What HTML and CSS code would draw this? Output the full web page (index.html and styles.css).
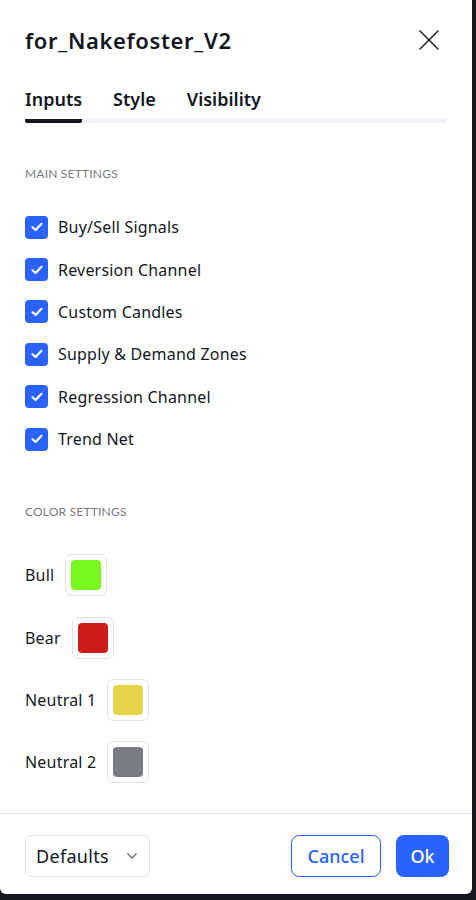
FILE: index.html
```html
<!DOCTYPE html>
<html>
<head>
<meta charset="utf-8">
<link rel="stylesheet" href="styles.css">
</head>
<body>
<div class="dialog">
  <div class="header">
    <div class="title">for_Nakefoster_V2</div>
    <svg class="close" width="22" height="22" viewBox="0 0 22 22"><path d="M1.5 1.5 L20.5 20.5 M20.5 1.5 L1.5 20.5" stroke="#131722" stroke-width="1.4" fill="none"/></svg>
  </div>
  <div class="tabs">
    <div class="tab active">Inputs</div>
    <div class="tab">Style</div>
    <div class="tab">Visibility</div>
  </div>
  <div class="content">
    <div class="section-title first">MAIN SETTINGS</div>
    <div class="check-list">
      <div class="check-row"><span class="cb"><svg width="14" height="14" viewBox="0 0 14 14"><path d="M2.5 7.2 L5.6 10 L11.5 3.8" stroke="#fff" stroke-width="2.2" fill="none" stroke-linecap="round" stroke-linejoin="round"/></svg></span><span class="label">Buy/Sell Signals</span></div>
      <div class="check-row"><span class="cb"><svg width="14" height="14" viewBox="0 0 14 14"><path d="M2.5 7.2 L5.6 10 L11.5 3.8" stroke="#fff" stroke-width="2.2" fill="none" stroke-linecap="round" stroke-linejoin="round"/></svg></span><span class="label">Reversion Channel</span></div>
      <div class="check-row"><span class="cb"><svg width="14" height="14" viewBox="0 0 14 14"><path d="M2.5 7.2 L5.6 10 L11.5 3.8" stroke="#fff" stroke-width="2.2" fill="none" stroke-linecap="round" stroke-linejoin="round"/></svg></span><span class="label">Custom Candles</span></div>
      <div class="check-row"><span class="cb"><svg width="14" height="14" viewBox="0 0 14 14"><path d="M2.5 7.2 L5.6 10 L11.5 3.8" stroke="#fff" stroke-width="2.2" fill="none" stroke-linecap="round" stroke-linejoin="round"/></svg></span><span class="label">Supply &amp; Demand Zones</span></div>
      <div class="check-row"><span class="cb"><svg width="14" height="14" viewBox="0 0 14 14"><path d="M2.5 7.2 L5.6 10 L11.5 3.8" stroke="#fff" stroke-width="2.2" fill="none" stroke-linecap="round" stroke-linejoin="round"/></svg></span><span class="label">Regression Channel</span></div>
      <div class="check-row"><span class="cb"><svg width="14" height="14" viewBox="0 0 14 14"><path d="M2.5 7.2 L5.6 10 L11.5 3.8" stroke="#fff" stroke-width="2.2" fill="none" stroke-linecap="round" stroke-linejoin="round"/></svg></span><span class="label">Trend Net</span></div>
    </div>
    <div class="section-title second">COLOR SETTINGS</div>
    <div class="color-list">
      <div class="color-row"><span class="label">Bull</span><span class="swatch-box"><span class="swatch bull"></span></span></div>
      <div class="color-row"><span class="label">Bear</span><span class="swatch-box"><span class="swatch bear"></span></span></div>
      <div class="color-row"><span class="label">Neutral 1</span><span class="swatch-box"><span class="swatch n1"></span></span></div>
      <div class="color-row"><span class="label">Neutral 2</span><span class="swatch-box"><span class="swatch n2"></span></span></div>
    </div>
  </div>
  <div class="footer">
    <div class="select">Defaults<svg width="12" height="8" viewBox="0 0 12 8"><path d="M1.5 1.5 L6 6 L10.5 1.5" stroke="#6a6d78" stroke-width="1.3" fill="none"/></svg></div>
    <div class="spacer"></div>
    <div class="btn cancel">Cancel</div>
    <div class="btn ok">Ok</div>
  </div>
</div>
</body>
</html>
```

FILE: styles.css
```css
html, body {
  margin: 0;
  padding: 0;
  background: #131722;
}
body {
  font-family: "Noto Sans", Lato, sans-serif;
  color: #131722;
}
.dialog {
  width: 472px;
  height: 894px;
  background: #fff;
  border-radius: 0 0 6px 6px;
  display: flex;
  flex-direction: column;
}
.header {
  display: flex;
  align-items: center;
  justify-content: space-between;
  height: 40px;
  padding: 20px 32px 0 25px;
}
.title {
  font-size: 22px;
  font-weight: 600;
  letter-spacing: 0.6px;
}
.close {
  display: block;
}
.tabs {
  display: flex;
  gap: 31px;
  margin: 27px 26px 0 25px;
  background: linear-gradient(#f0f3fa, #f0f3fa) left bottom / 100% 4px no-repeat;
  border-radius: 2px;
}
.tab {
  font-size: 18px;
  font-weight: 600;
  line-height: 24px;
  padding-bottom: 8px;
  border-bottom: 4px solid transparent;
}
.tab.active {
  border-bottom-color: #131722;
  border-radius: 0 0 2px 2px;
}
.content {
  flex: 1;
  padding: 0 25px;
}
.section-title {
  font-family: Lato, sans-serif;
  font-size: 12px;
  line-height: 16px;
  color: #787b86;
  letter-spacing: 0.2px;
}
.section-title.first {
  margin-top: 43px;
  margin-bottom: 24px;
}
.section-title.second {
  margin-top: 44px;
  margin-bottom: 24px;
}
.check-row {
  height: 42.4px;
  display: flex;
  align-items: center;
  gap: 10px;
}
.cb {
  width: 23px;
  height: 23px;
  border-radius: 4px;
  background: #2962ff;
  display: flex;
  align-items: center;
  justify-content: center;
}
.label {
  font-size: 16px;
  line-height: 20px;
  letter-spacing: 0.2px;
}
.color-row {
  height: 62.3px;
  display: flex;
  align-items: center;
  gap: 11px;
}
.swatch-box {
  width: 40px;
  height: 40px;
  border: 1px solid #e0e3eb;
  border-radius: 6px;
  display: flex;
  align-items: center;
  justify-content: center;
}
.swatch {
  width: 30px;
  height: 30px;
  border-radius: 4px;
}
.bull { background: #76f71f; }
.bear { background: #cd1c17; }
.n1 { background: #e8d44a; }
.n2 { background: #787b86; }
.footer {
  border-top: 1px solid #e0e3eb;
  padding: 21px 23px 17px 25px;
  display: flex;
  align-items: center;
  gap: 15px;
}
.spacer { flex: 1; }
.select {
  box-sizing: border-box;
  width: 125px;
  height: 42px;
  border: 1px solid #e0e3eb;
  border-radius: 6px;
  display: flex;
  align-items: center;
  justify-content: space-between;
  padding: 0 11px 0 10px;
  font-size: 18px;
  letter-spacing: 0.3px;
}
.btn {
  box-sizing: border-box;
  height: 42px;
  border-radius: 8px;
  display: flex;
  align-items: center;
  justify-content: center;
  font-size: 18px;
  font-weight: 500;
}
.cancel {
  width: 90px;
  border: 1px solid #2962ff;
  color: #2962ff;
}
.ok {
  width: 53px;
  background: #2962ff;
  color: #fff;
}
```
